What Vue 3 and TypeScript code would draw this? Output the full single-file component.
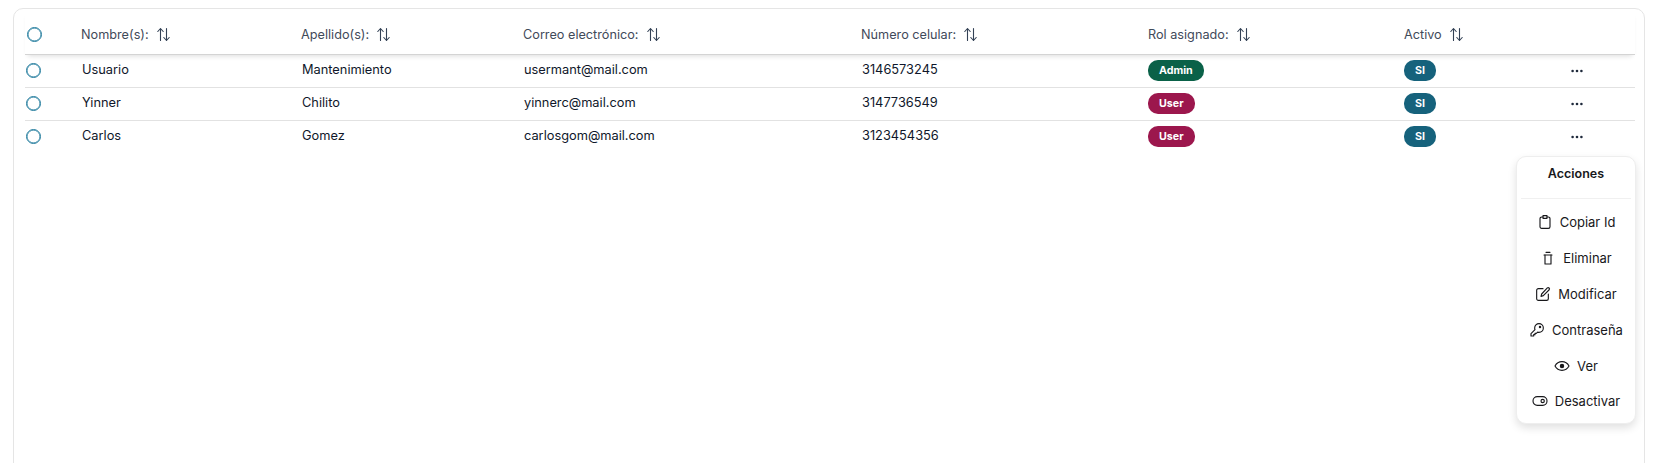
<template>
  <div class="page">
    <div class="card">
      <table class="users-table">
        <colgroup>
          <col v-for="w in colWidths" :key="w.key" :style="{ width: w.px + 'px' }" />
        </colgroup>
        <thead>
          <tr>
            <th class="check-cell"><span class="radio radio-head"></span></th>
            <th v-for="col in columns" :key="col">
              <span class="head-label">
                {{ col }}
                <svg class="sort-icon" viewBox="0 0 15 15" fill="none" stroke="currentColor" stroke-width="1.1" stroke-linecap="round" stroke-linejoin="round">
                  <path d="M4.500 13.500V1.500M1.800 4.500l2.700-3 2.700 3" />
                  <path d="M10.500 1.500v12M7.800 10.500l2.700 3 2.700-3" />
                </svg>
              </span>
            </th>
            <th></th>
          </tr>
        </thead>
        <tbody>
          <tr v-for="user in users" :key="user.email">
            <td class="check-cell"><span class="radio"></span></td>
            <td>{{ user.name }}</td>
            <td>{{ user.lastName }}</td>
            <td>{{ user.email }}</td>
            <td>{{ user.phone }}</td>
            <td><span class="pill" :class="user.role === 'Admin' ? 'pill-admin' : 'pill-user'">{{ user.role }}</span></td>
            <td><span class="pill pill-active">SI</span></td>
            <td class="dots-cell">
              <svg class="dots" viewBox="0 0 12 4" fill="currentColor">
                <circle cx="1.600" cy="2" r="1.300" />
                <circle cx="6" cy="2" r="1.300" />
                <circle cx="10.400" cy="2" r="1.300" />
              </svg>
            </td>
          </tr>
        </tbody>
      </table>

      <!-- Menu de acciones -->
      <div class="menu">
        <div class="menu-title">Acciones</div>
        <div class="menu-sep"></div>
        <div class="menu-list">
          <div class="menu-item">
            <svg viewBox="0 0 24 24"><path d="M9 4.500H7A2.500 2.500 0 0 0 4.500 7v12A2.500 2.500 0 0 0 7 21.500h10a2.500 2.500 0 0 0 2.500-2.500V7A2.500 2.500 0 0 0 17 4.500h-2" /><path d="M9 2.500h6v4H9z" /></svg>
            Copiar Id
          </div>
          <div class="menu-item">
            <svg viewBox="0 0 24 24"><path d="M6 7.500h12" /><path d="M9 3.500h6" /><path d="M7.500 7.500V21h9V7.500" /></svg>
            Eliminar
          </div>
          <div class="menu-item">
            <svg viewBox="0 0 24 24"><path d="M12 4H5a2.500 2.500 0 0 0-2.500 2.500V19A2.500 2.500 0 0 0 5 21.500h12.500A2.500 2.500 0 0 0 20 19v-7" /><path d="M18.500 2.800a2 2 0 0 1 2.800 2.800L12.500 14.500 9 15.500l1-3.500z" /></svg>
            Modificar
          </div>
          <div class="menu-item">
            <svg viewBox="0 0 24 24"><path d="M15 2.500a6.500 6.500 0 0 1 0 13c-.700 0-1.400-.100-2-.300L11 17H9v2H7v2H3v-3.500l6-6c-.300-.800-.500-1.600-.500-2.500A6.500 6.500 0 0 1 15 2.500z" /><circle cx="16.500" cy="7.500" r="1" /></svg>
            Contraseña
          </div>
          <div class="menu-item">
            <svg viewBox="0 0 24 24"><path d="M1.500 12S5 5.500 12 5.500 22.500 12 22.500 12 19 18.500 12 18.500 1.500 12 1.500 12z" /><circle cx="12" cy="12" r="2.500" fill="currentColor" /></svg>
            Ver
          </div>
          <div class="menu-item">
            <svg viewBox="0 0 24 24"><rect x="1.500" y="5.500" width="21" height="13" rx="6.500" /><circle cx="16" cy="12" r="2.500" /></svg>
            Desactivar
          </div>
        </div>
      </div>
    </div>
  </div>
</template>

<script setup lang="ts">
interface User {
  name: string
  lastName: string
  email: string
  phone: string
  role: 'Admin' | 'User'
}

const colWidths = [
  { key: 'check', px: 56 },
  { key: 'name', px: 220 },
  { key: 'last', px: 222 },
  { key: 'mail', px: 338 },
  { key: 'phone', px: 287 },
  { key: 'role', px: 256 },
  { key: 'active', px: 160 },
  { key: 'menu', px: 71 }
]

const columns = ['Nombre(s):', 'Apellido(s):', 'Correo electrónico:', 'Número celular:', 'Rol asignado:', 'Activo']

const users: User[] = [
  { name: 'Usuario', lastName: 'Mantenimiento', email: 'usermant@mail.com', phone: '3146573245', role: 'Admin' },
  { name: 'Yinner', lastName: 'Chilito', email: 'yinnerc@mail.com', phone: '3147736549', role: 'User' },
  { name: 'Carlos', lastName: 'Gomez', email: 'carlosgom@mail.com', phone: '3123454356', role: 'User' }
]
</script>

<style>
html,
body {
  margin: 0;
  background: #fff;
  overflow: hidden;
}
</style>

<style scoped>
.page {
  height: 463px;
  padding: 8px 12px 0 13px;
  box-sizing: border-box;
  overflow: hidden;
  font-family: Inter, "Noto Sans", sans-serif;
}

.card {
  position: relative;
  height: 520px;
  padding: 0 0 0 11px;
  border: 1px solid #e5e5e5;
  border-radius: 10px;
  box-sizing: border-box;
}

.users-table {
  table-layout: fixed;
  width: 1610px;
  border-collapse: collapse;
  font-size: 12.800px;
  color: #0f172a;
}

thead tr {
  height: 45px;
  box-shadow: 0 5px 5px -3px rgba(0, 0, 0, 0.14);
  border-bottom: 1px solid #d4d4d4;
}

th {
  padding: 6px 0 0;
  font-weight: 400;
  font-size: 12.700px;
  text-align: left;
  color: #3f4a5a;
}

td {
  padding: 0 0 2px 1px;
  height: 33px;
  box-sizing: border-box;
  border-bottom: 1px solid #e2e2e2;
}

tbody tr:last-child td {
  border-bottom: none;
}

td.check-cell {
  padding: 0;
}

th.check-cell {
  padding: 6px 0 0;
}

.radio {
  display: block;
  width: 13px;
  height: 13px;
  margin-left: 1px;
  border: 1px solid #1f7a9c;
  border-radius: 50%;
  box-shadow: inset 0 0 0 0.5px #1f7a9c;
}

.radio-head {
  margin-left: 2px;
}

.head-label {
  display: inline-flex;
  align-items: center;
  gap: 7px;
}

.sort-icon {
  width: 15px;
  height: 15px;
  color: #334155;
}

.pill {
  display: inline-block;
  height: 21px;
  line-height: 21px;
  margin: 2px 0 0 -1px;
  padding: 0 11px;
  border-radius: 10px;
  font-size: 10.700px;
  font-weight: 700;
  color: #fff;
  vertical-align: middle;
}

.pill-admin {
  background: #0a6148;
}

.pill-user {
  background: #9c174d;
}

.pill-active {
  background: #16627c;
}

td.dots-cell {
  padding: 0 0 0 7px;
}

.dots {
  display: block;
  width: 12px;
  height: 4px;
  color: #1e293b;
}

.menu {
  position: absolute;
  top: 147px;
  left: 1502px;
  width: 120px;
  height: 268px;
  border: 1px solid #eeeeee;
  border-radius: 10px;
  background: #fff;
  box-shadow: 0 4px 8px rgba(0, 0, 0, 0.12);
  box-sizing: border-box;
  color: #18181b;
  font-size: 13px;
}

.menu-title {
  height: 41px;
  line-height: 33px;
  text-align: center;
  font-weight: 600;
  font-size: 12.500px;
}

.menu-sep {
  height: 1px;
  margin: 0 4px;
  background: #f0f0f0;
}

.menu-list {
  display: flex;
  flex-direction: column;
  padding-top: 5.500px;
}

.menu-item {
  display: flex;
  align-items: center;
  justify-content: center;
  gap: 7px;
  height: 35.800px;
  white-space: nowrap;
}

.menu-item svg {
  width: 16px;
  height: 16px;
  fill: none;
  stroke: currentColor;
  stroke-width: 1.700;
  stroke-linecap: round;
  stroke-linejoin: round;
  flex-shrink: 0;
}
</style>
